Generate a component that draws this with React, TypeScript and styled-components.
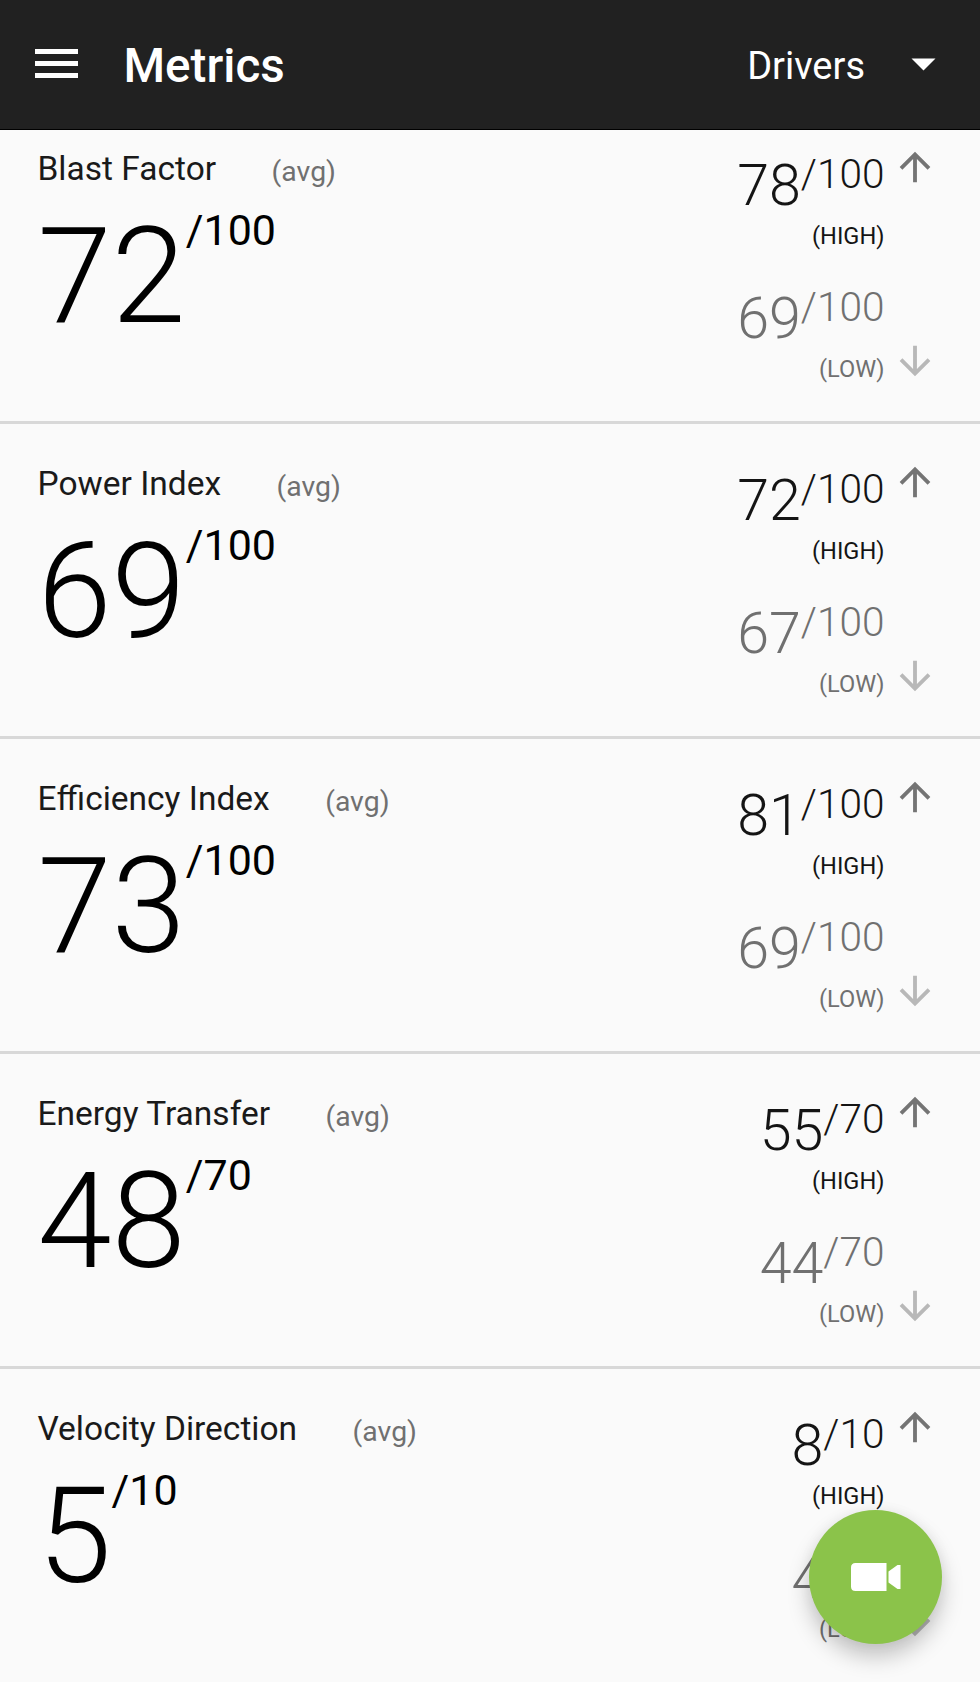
import React from "react";
import styled, { createGlobalStyle } from "styled-components";

const GlobalStyle = createGlobalStyle`
  *, *::before, *::after { box-sizing: border-box; }
  body { margin: 0; background: #fafafa; font-family: Roboto, sans-serif; }
  button { border: 0; padding: 0; background: none; font: inherit; color: inherit; }
`;

const Screen = styled.div`
  position: relative;
  width: 980px;
  height: 1682px;
  overflow: hidden;
  background: #fafafa;
`;

const AppBar = styled.header`
  position: relative;
  z-index: 1;
  display: flex;
  align-items: center;
  height: 130px;
  padding: 0 44px 0 35px;
  background: #212121;
  border-bottom: 1px solid #000;
  color: #fff;
`;

const MenuButton = styled.button`
  display: flex;
  flex-direction: column;
  gap: 7px;
  width: 43px;
  margin-top: -2px;
`;

const MenuBar = styled.span`
  height: 5px;
  background: #fff;
`;

const Title = styled.h1`
  flex: 1;
  margin: 3px 0 0 45.5px;
  font-size: 47.6px;
  line-height: 56px;
  font-weight: 500;
`;

const ClubPicker = styled.button`
  display: flex;
  align-items: center;
  gap: 46px;
  font-size: 38px;
  line-height: 46px;
  padding-top: 3px;
`;

const Caret = styled.svg`
  width: 25px;
  height: 13px;
  margin-top: -4px;
`;

/* The list is scrolled slightly, so its top sits under the app bar. */
const MetricList = styled.main`
  margin-top: -21px;
`;

const MetricRow = styled.section`
  display: flex;
  justify-content: space-between;
  height: 315px;
  padding: 35px 42.5px 0 37.5px;
  border-bottom: 3px solid #d8d8d8;

  &:last-child {
    border-bottom-color: transparent;
  }
`;

const Average = styled.div`
  padding-top: 5px;
`;

const Heading = styled.div`
  display: flex;
  height: 40px;
  gap: 55.5px;
`;

const Name = styled.h2`
  margin: 0;
  font-size: 33.5px;
  line-height: 40px;
  font-weight: 400;
  color: #1a1a1a;
`;

const Qualifier = styled.span`
  padding-top: 2px;
  font-size: 28.4px;
  line-height: 41px;
  color: #707070;
`;

const Score = styled.div`
  display: flex;
  align-items: flex-start;
  margin-top: 19px;
  color: #000;
`;

const ScoreValue = styled.span`
  padding-top: 2px;
  font-size: 133.6px;
  line-height: 134px;
  font-weight: 300;
`;

const ScoreMax = styled.span`
  font-size: 43px;
  line-height: 44px;
`;

const Range = styled.div`
  display: flex;
  gap: 7px;
`;

const Extremes = styled.div`
  display: flex;
  flex-direction: column;
  gap: 37px;
  padding-top: 9px;
`;

const Extreme = styled.div<{ $low?: boolean }>`
  display: flex;
  flex-direction: column;
  align-items: flex-end;
  height: 96px;
  color: ${(p) => (p.$low ? "#707070" : "#141414")};
`;

const ExtremeScore = styled.div`
  display: flex;
  align-items: flex-start;
  height: 61px;
  font-weight: 300;
`;

const ExtremeValue = styled.span`
  padding-top: 4px;
  font-size: 57.4px;
  line-height: 58px;
`;

const ExtremeMax = styled.span`
  font-size: 40.6px;
  line-height: 42px;
`;

const ExtremeLabel = styled.span`
  margin-top: 8px;
  font-size: 23.6px;
  line-height: 28px;
`;

const Arrows = styled.div`
  display: flex;
  flex-direction: column;
  justify-content: space-between;
  height: 240px;
`;

const Arrow = styled.svg<{ $down?: boolean }>`
  width: 46px;
  height: 46px;
  fill: ${(p) => (p.$down ? "#b8b8b8" : "#747474")};
`;

const RecordButton = styled.button`
  position: absolute;
  left: 809px;
  top: 1510px;
  display: flex;
  align-items: center;
  justify-content: center;
  width: 133px;
  height: 134px;
  border-radius: 50%;
  background: #8bc34a;
  box-shadow: 0 13px 22px rgba(0, 0, 0, 0.22), 0 0 14px rgba(0, 0, 0, 0.05);
`;

const metrics = [
  { name: "Blast Factor", avg: 72, high: 78, low: 69, max: 100 },
  { name: "Power Index", avg: 69, high: 72, low: 67, max: 100 },
  { name: "Efficiency Index", avg: 73, high: 81, low: 69, max: 100 },
  { name: "Energy Transfer", avg: 48, high: 55, low: 44, max: 70 },
  { name: "Velocity Direction", avg: 5, high: 8, low: 4, max: 10 },
];

function ExtremeBlock({ value, max, low }: { value: number; max: number; low?: boolean }) {
  return (
    <Extreme $low={low}>
      <ExtremeScore>
        <ExtremeValue>{value}</ExtremeValue>
        <ExtremeMax>/{max}</ExtremeMax>
      </ExtremeScore>
      <ExtremeLabel>{low ? "(LOW)" : "(HIGH)"}</ExtremeLabel>
    </Extreme>
  );
}

export default function App() {
  return (
    <Screen>
      <GlobalStyle />
      <AppBar>
        <MenuButton aria-label="Menu">
          <MenuBar />
          <MenuBar />
          <MenuBar />
        </MenuButton>
        <Title>Metrics</Title>
        <ClubPicker>
          Drivers
          <Caret viewBox="0 0 25 13">
            <path d="M.5 .5h24l-12 12z" fill="#fff" />
          </Caret>
        </ClubPicker>
      </AppBar>
      <MetricList>
        {metrics.map((m) => (
          <MetricRow key={m.name}>
            <Average>
              <Heading>
                <Name>{m.name}</Name>
                <Qualifier>(avg)</Qualifier>
              </Heading>
              <Score>
                <ScoreValue>{m.avg}</ScoreValue>
                <ScoreMax>/{m.max}</ScoreMax>
              </Score>
            </Average>
            <Range>
              <Extremes>
                <ExtremeBlock value={m.high} max={m.max} />
                <ExtremeBlock value={m.low} max={m.max} low />
              </Extremes>
              <Arrows>
                <Arrow viewBox="0 0 24 24">
                  <path d="M4 12l1.41 1.41L11 7.83V20h2V7.83l5.58 5.59L20 12l-8-8-8 8z" />
                </Arrow>
                <Arrow $down viewBox="0 0 24 24">
                  <path d="M20 12l-1.41-1.41L13 16.17V4h-2v12.17l-5.58-5.59L4 12l8 8 8-8z" />
                </Arrow>
              </Arrows>
            </Range>
          </MetricRow>
        ))}
      </MetricList>
      <RecordButton aria-label="Record">
        <svg width="50" height="28" viewBox="0 0 50 28" fill="#fff">
          <path d="M4.5 0H35.5V28H4.5Q0 28 0 23.5V4.5Q0 0 4.5 0Z" />
          <path d="M37.5 8.5L46.5 2H49.5V26H46.5L37.5 19.5Z" />
        </svg>
      </RecordButton>
    </Screen>
  );
}
